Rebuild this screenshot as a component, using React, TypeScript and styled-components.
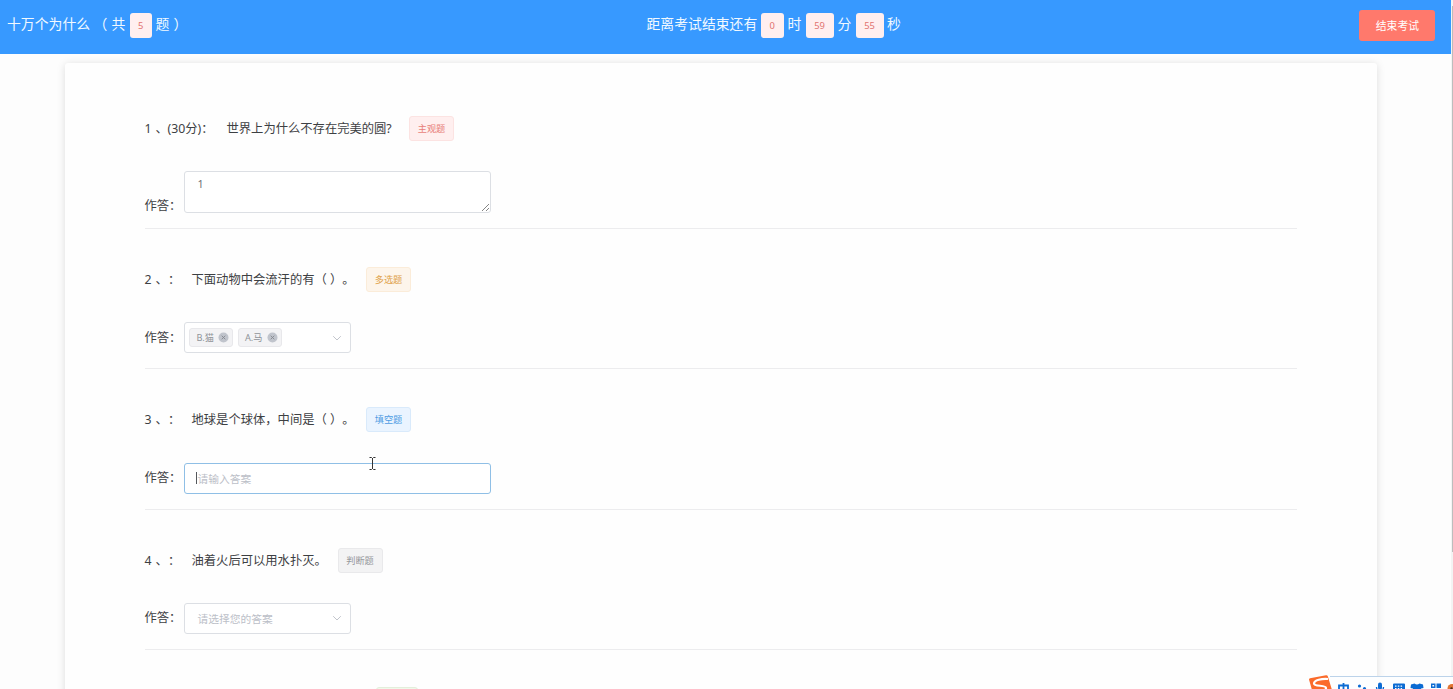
import React from 'react';
import styled, { createGlobalStyle, css } from 'styled-components';

const Global = createGlobalStyle`
  * { box-sizing: border-box; }
  body { margin: 0; background: #fdfdfd; overflow: hidden; font-family: "Noto Sans", "Noto Sans CJK SC", sans-serif; color: #3d4043; text-spacing-trim: space-all; }
  #root { height: 689px; overflow: hidden; }
`;

const Page = styled.div`
  position: relative;
  display: flex;
  flex-direction: column;
  height: 689px;
  padding-right: 2px;
  overflow: hidden;
`;

const Header = styled.header`
  display: flex;
  flex: none;
  align-items: flex-start;
  height: 54px;
  background: #3799ff;
  color: #f2f9ff;
  font-size: 13.85px;
  line-height: 24px;
`;

const HeaderGroup = styled.div<{ $width: number; $inset: number }>`
  display: flex;
  flex: none;
  width: ${(p) => p.$width}px;
  padding: 13px 0 0 ${(p) => p.$inset}px;
  white-space: nowrap;
`;

const HeaderText = styled.span<{ $width: number }>`
  flex: none;
  width: ${(p) => p.$width}px;
  margin-top: -1px;
`;

const CountTag = styled.span<{ $width: number; $after: number }>`
  flex: none;
  width: ${(p) => p.$width}px;
  height: 25px;
  margin-right: ${(p) => p.$after}px;
  border-radius: 3px;
  background: #ffefef;
  color: #e2736f;
  font-size: 9.4px;
  line-height: 25px;
  text-align: center;
`;

const EndButton = styled.button`
  width: 76px;
  height: 31px;
  margin-top: 10px;
  padding: 0;
  border: 0;
  border-radius: 3px;
  background: #ff796c;
  color: #fff;
  font: 10.8px/30px "Noto Sans", "Noto Sans CJK SC", sans-serif;
`;

const Card = styled.main`
  flex: none;
  width: 1312px;
  height: 700px;
  margin: 8.5px 0 0 65px;
  padding: 53.5px 80px 0 79.5px;
  border-radius: 3px;
  background: #fefefe;
  box-shadow: 0 1px 9px rgba(0, 0, 0, 0.13);
`;

const Question = styled.section`
  padding-bottom: 15.2px;
  margin-bottom: 38px;
  border-bottom: 1px solid #ececee;
`;

const TitleRow = styled.div`
  display: flex;
  height: 24.8px;
  margin-bottom: 30.5px;
  font-size: 12.3px;
  line-height: 26px;
  white-space: nowrap;
`;

const Cell = styled.span<{ $width: number }>`
  flex: none;
  width: ${(p) => p.$width}px;
`;

const tones = {
  danger: css`background: #ffefef; border-color: #fce3e2; color: #e87f7a;`,
  warning: css`background: #fdf5eb; border-color: #fbecd9; color: #e0a14a;`,
  primary: css`background: #eaf4ff; border-color: #d9eafb; color: #4f9ce3;`,
  info: css`background: #f3f3f4; border-color: #e9e9eb; color: #96989c;`,
  success: css`background: #f0f9eb; border-color: #e4eedb; color: #67c23a;`,
};

const TypeTag = styled.span<{ $tone: keyof typeof tones; $width?: number }>`
  flex: none;
  width: ${(p) => p.$width ?? 45}px;
  height: 25px;
  border: 1px solid;
  border-radius: 3px;
  font-size: 9.2px;
  line-height: 24px;
  text-align: center;
  ${(p) => tones[p.$tone]}
`;

const NextTitle = styled.div`
  display: flex;
  margin-top: -1px;
  padding-left: 231.5px;
`;

const AnswerRow = styled.div<{ $end?: boolean }>`
  display: flex;
  align-items: ${(p) => (p.$end ? 'flex-end' : 'center')};
`;

const Label = styled.span<{ $end?: boolean }>`
  flex: none;
  width: 39.9px;
  margin-bottom: ${(p) => (p.$end ? -2 : 0)}px;
  font-size: 12.3px;
  line-height: 18px;
`;

const field = css`
  border: 1px solid #dcdfe4;
  border-radius: 3px;
  background: #fff;
  font-size: 10.75px;
`;

const TextArea = styled.div`
  ${field}
  display: flex;
  justify-content: space-between;
  width: 307px;
  height: 41.7px;
  padding: 5px 0 0 12px;
  color: #6c6f74;
  line-height: 15px;
`;

const Resize = styled.svg`
  align-self: flex-end;
`;

const Input = styled.div`
  ${field}
  display: flex;
  align-items: center;
  width: 307px;
  height: 30.8px;
  padding-left: 11px;
  border-color: #8fbfe6;
  color: #bcc0c8;
`;

const Caret = styled.i`
  width: 1px;
  height: 12px;
  background: #55585c;
`;

const Select = styled.div<{ $chips?: boolean }>`
  ${field}
  display: flex;
  align-items: center;
  width: 166.5px;
  height: 30.8px;
  padding: 0 8px 0 ${(p) => (p.$chips ? 4 : 12)}px;
  color: #bcc0c8;
`;

const Chevron = styled.svg`
  margin-left: auto;
`;

const Chip = styled.span`
  display: flex;
  align-items: center;
  justify-content: space-between;
  width: 44px;
  height: 19px;
  margin-right: 4.5px;
  padding: 0 3px 0 6px;
  border: 1px solid #e8e8eb;
  border-radius: 3px;
  background: #f3f3f5;
  color: #909399;
  font-size: 9.2px;
  line-height: 17px;
`;

const ScrollTrack = styled.div`
  position: absolute;
  top: 0;
  right: 0;
  width: 2px;
  height: 689px;
  padding-top: 6px;
  background: #f3f3f3;
`;

const ScrollThumb = styled.div`
  width: 1px;
  height: 546px;
  margin-left: 1px;
  background: #bdbdbd;
`;

const Pointer = styled.svg`
  position: absolute;
  left: 368px;
  top: 456px;
`;

const ImeBar = styled.div`
  position: absolute;
  left: 1308px;
  top: 673px;
  width: 145px;
  height: 16px;
  overflow: hidden;
`;

const Arrow = () => (
  <Chevron width="10" height="8" viewBox="0 0 10 8" fill="none" stroke="#c2c5cc">
    <path d="M1.2 2.2 5 6l3.8-3.8" />
  </Chevron>
);

const Close = () => (
  <svg width="11" height="11" viewBox="0 0 11 11">
    <circle cx="5.5" cy="5.5" r="5" fill="#c0c4cc" />
    <path d="m3.7 3.7 3.6 3.6m0-3.6L3.7 7.3" stroke="#85888f" strokeWidth=".9" />
  </svg>
);

interface HeadingProps {
  no: string;
  points?: string;
  text: string;
  width: number;
  tone: keyof typeof tones;
  type: string;
}

const Heading = ({ no, points, text, width, tone, type }: HeadingProps) => (
  <TitleRow>
    <Cell $width={11}>{no}</Cell>
    <Cell $width={points ? 12 : 12.5}>、</Cell>
    <Cell $width={points ? 59 : 23.5}>{points ?? '：'}</Cell>
    <Cell $width={width}>{text}</Cell>
    <TypeTag $tone={tone}>{type}</TypeTag>
  </TitleRow>
);

export default function App() {
  return (
    <>
      <Global />
      <Page>
        <Header>
          <HeaderGroup $width={646} $inset={7}>
            <HeaderText $width={86.5}>十万个为什么</HeaderText>
            <HeaderText $width={18}>（</HeaderText>
            <HeaderText $width={18}>共</HeaderText>
            <CountTag $width={22.5} $after={3.5}>5</CountTag>
            <HeaderText $width={18}>题</HeaderText>
            <HeaderText $width={14}>）</HeaderText>
          </HeaderGroup>
          <HeaderGroup $width={713.4} $inset={0.5}>
            <HeaderText $width={114.5}>距离考试结束还有</HeaderText>
            <CountTag $width={22.5} $after={4}>0</CountTag>
            <HeaderText $width={18}>时</HeaderText>
            <CountTag $width={28} $after={4}>59</CountTag>
            <HeaderText $width={18}>分</HeaderText>
            <CountTag $width={28} $after={3.5}>55</CountTag>
            <HeaderText $width={16}>秒</HeaderText>
          </HeaderGroup>
          <EndButton>结束考试</EndButton>
        </Header>
        <Card>
          <Question>
            <Heading no="1" points="(30分)：" text="世界上为什么不存在完美的圆?" width={182.5} tone="danger" type="主观题" />
            <AnswerRow $end>
              <Label $end>作答：</Label>
              <TextArea>
                1
                <Resize width="9" height="9" viewBox="0 0 9 9" stroke="#777" strokeWidth=".9">
                  <path d="M1 8 8 1M5 8l3-3" />
                </Resize>
              </TextArea>
            </AnswerRow>
          </Question>
          <Question>
            <Heading no="2" text="下面动物中会流汗的有（ ）。" width={174.5} tone="warning" type="多选题" />
            <AnswerRow>
              <Label>作答：</Label>
              <Select $chips>
                <Chip>B.猫<Close /></Chip>
                <Chip>A.马<Close /></Chip>
                <Arrow />
              </Select>
            </AnswerRow>
          </Question>
          <Question>
            <Heading no="3" text="地球是个球体，中间是（ ）。" width={174.5} tone="primary" type="填空题" />
            <AnswerRow>
              <Label>作答：</Label>
              <Input><Caret />请输入答案</Input>
            </AnswerRow>
          </Question>
          <Question>
            <Heading no="4" text="油着火后可以用水扑灭。" width={146} tone="info" type="判断题" />
            <AnswerRow>
              <Label>作答：</Label>
              <Select>请选择您的答案<Arrow /></Select>
            </AnswerRow>
          </Question>
          <NextTitle>
            <TypeTag $tone="success" $width={42} />
          </NextTitle>
        </Card>
        <ScrollTrack>
          <ScrollThumb />
        </ScrollTrack>
        <Pointer width="9" height="15" viewBox="0 0 9 15" fill="none" stroke="#333">
          <path d="M1.500 1.500h2l1 1 1-1h2M1.500 13.500h2l1-1 1 1h2M4.500 2v11" />
        </Pointer>
        <ImeBar>
          <svg width="145" height="16" viewBox="0 0 145 16">
            <path d="M22 2.5H145V16H22z" fill="#fdfeff" />
            <path d="M22 2.500H145" stroke="#bcd3ea" />
            <path d="M1 5.500Q1 4.500 2 4.200L18 1.300q1.500-.2 1.800 1L24 16H4z" fill="#fb6b2b" />
            <path d="M20 5C14 4.500 6 6 6 9.500s12 1 12 4.500-5 3-11 3" fill="none" stroke="#fff" strokeWidth="2.200" />
            <g fill="none" stroke="#0b6bd3" strokeWidth="1.800">
              <path d="M31 11.500h9v5h-9zM35.500 9V16" />
              <path d="M68.500 13q0 3.500 3.500 3.500t3.500-3.500" strokeWidth="1.300" />
            </g>
            <g fill="#0b6bd3">
              <circle cx="51.500" cy="12" r="1.600" />
              <circle cx="56.500" cy="14.500" r="1.600" />
              <rect x="70" y="8.500" width="4" height="7" rx="2" />
              <path fillRule="evenodd" d="M86 9.500h10q1 0 1 1V16H85v-5.500q0-1 1-1zM87 11.500v1.300h1.500v-1.300zm2.800 0v1.300h1.500v-1.300zm2.800 0v1.300h1.500v-1.300zM87 14v1.300h1.500V14zm2.800 0v1.300h1.500V14zm2.800 0v1.300h1.500V14z" />
              <path d="M106.500 9.500q2.500 2 5 0l3.500 1 .5 3.500-2.500.5V16h-8v-1.500l-2.500-.5.500-3.500z" />
              <path fillRule="evenodd" d="M123 9.500h4.500V14H123zm1.400 1.400v1.700h1.700v-1.700zM128.500 9.500h4.500V14h-4.500zM123 15h4.500v1H123zM128.500 15h4.500v1h-4.500z" />
            </g>
            <circle cx="144" cy="14.500" r="4.500" fill="#e27432" />
            <circle cx="143.500" cy="14.500" r="1.200" fill="#4a2a20" />
          </svg>
        </ImeBar>
      </Page>
    </>
  );
}
